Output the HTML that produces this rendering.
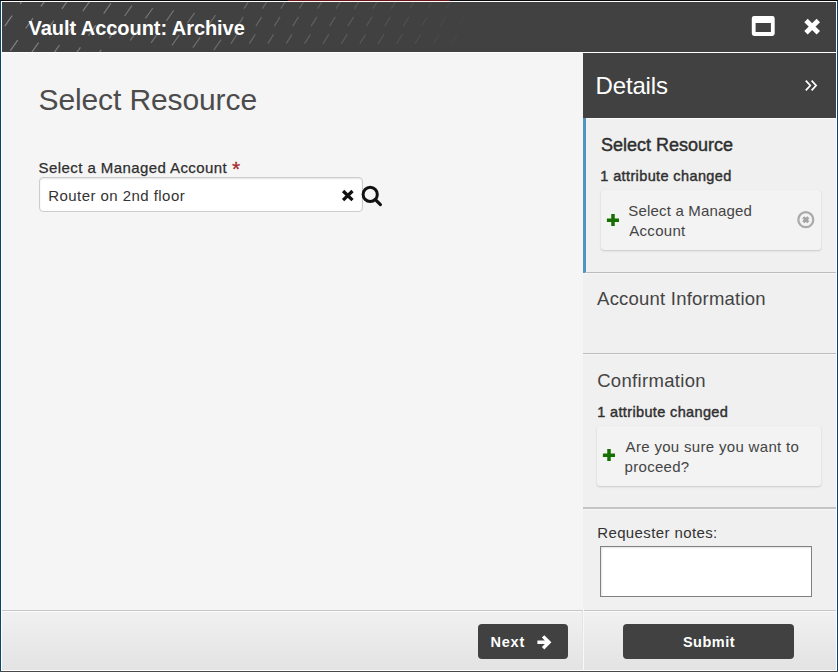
<!DOCTYPE html>
<html><head><meta charset="utf-8"><title>Vault Account: Archive</title>
<style>
*{box-sizing:border-box;margin:0;padding:0}
html,body{width:838px;height:672px;overflow:hidden;background:#f5f5f5;font-family:"Liberation Sans",sans-serif;color:#333}
.abs{position:absolute}
#root{position:absolute;left:0;top:0;width:838px;height:672px;overflow:hidden;background:#f5f5f5}
.t{position:absolute;white-space:nowrap;line-height:1}
#hdr{left:2px;top:2px;width:834px;height:50px;background:#414141;overflow:hidden}
#main{left:2px;top:53px;width:581px;height:557px;background:#f5f5f5}
#side{left:583px;top:53px;width:253px;height:557px;background:#f0f0f0}
#dhead{left:583px;top:53px;width:253px;height:65px;background:#414141}
.card{position:absolute;background:#f3f3f3;border-radius:3px;box-shadow:0 1px 2px rgba(0,0,0,.16),0 0 1px rgba(0,0,0,.07)}
.hline{position:absolute;left:583px;width:253px;height:1px}
.btn{position:absolute;background:#414141;border-radius:4px;height:35px;top:624px}
</style></head><body>
<div id="root">
  <!-- outer frame -->
  <div class="abs" style="left:0;top:0;width:838px;height:1px;background:#0a0a0a"></div>
  <div class="abs" style="left:288px;top:0;width:162px;height:1px;background:#6d1515"></div>
  <div class="abs" style="left:0;top:1px;width:1px;height:671px;background:#03496d"></div>
  <div class="abs" style="left:837px;top:1px;width:1px;height:671px;background:#0e3f6b"></div>
  <div class="abs" style="left:1px;top:1px;width:836px;height:670px;background:#fff"></div>
  <div class="abs" style="left:0;top:671px;width:838px;height:1px;background:#474747"></div>

  <!-- title bar -->
  <div class="abs" id="hdr">
    <svg class="abs" style="left:0;top:0" width="500" height="50" viewBox="2 2 500 50">
      <defs><linearGradient id="fd" x1="0" x2="1" y1="0" y2="0">
        <stop offset="0" stop-color="#fff" stop-opacity=".36"/>
        <stop offset=".45" stop-color="#fff" stop-opacity=".22"/>
        <stop offset=".7" stop-color="#fff" stop-opacity=".13"/>
        <stop offset=".96" stop-color="#fff" stop-opacity="0"/></linearGradient>
        <mask id="mk"><rect x="0" y="0" width="500" height="60" fill="url(#fd)"/></mask>
      </defs>
      <g stroke="#fff" stroke-width="1.15" mask="url(#mk)" stroke-linecap="butt">
<line x1="-0.8" y1="1.6" x2="6.5" y2="-8.8"/>
<line x1="4.8" y1="26.1" x2="12.1" y2="15.7"/>
<line x1="10.4" y1="50.6" x2="17.7" y2="40.2"/>
<line x1="20.1" y1="4.0" x2="27.4" y2="-6.4"/>
<line x1="25.7" y1="28.5" x2="33.0" y2="18.1"/>
<line x1="31.3" y1="53.0" x2="38.6" y2="42.6"/>
<line x1="41.0" y1="6.4" x2="48.3" y2="-4.0"/>
<line x1="46.6" y1="30.9" x2="53.9" y2="20.5"/>
<line x1="52.2" y1="55.4" x2="59.5" y2="45.0"/>
<line x1="61.9" y1="8.8" x2="69.2" y2="-1.6"/>
<line x1="67.5" y1="33.3" x2="74.8" y2="22.9"/>
<line x1="73.1" y1="57.8" x2="80.4" y2="47.4"/>
<line x1="82.8" y1="11.2" x2="90.1" y2="0.8"/>
<line x1="88.4" y1="35.7" x2="95.7" y2="25.3"/>
<line x1="94.0" y1="60.2" x2="101.3" y2="49.8"/>
<line x1="103.7" y1="13.6" x2="111.0" y2="3.2"/>
<line x1="109.3" y1="38.1" x2="116.6" y2="27.7"/>
<line x1="114.9" y1="62.6" x2="122.2" y2="52.2"/>
<line x1="124.6" y1="16.0" x2="131.9" y2="5.6"/>
<line x1="130.2" y1="40.5" x2="137.5" y2="30.1"/>
<line x1="145.5" y1="18.4" x2="152.8" y2="8.0"/>
<line x1="151.1" y1="42.9" x2="158.4" y2="32.5"/>
<line x1="166.4" y1="20.8" x2="173.7" y2="10.4"/>
<line x1="172.0" y1="45.3" x2="179.3" y2="34.9"/>
<line x1="187.3" y1="23.2" x2="194.6" y2="12.8"/>
<line x1="192.9" y1="47.7" x2="200.2" y2="37.3"/>
<line x1="202.6" y1="1.1" x2="209.9" y2="-9.3"/>
<line x1="208.2" y1="25.6" x2="215.5" y2="15.2"/>
<line x1="213.8" y1="50.1" x2="221.1" y2="39.7"/>
<line x1="244.0" y1="8.6" x2="249.8" y2="-0.6"/>
<line x1="262.4" y1="8.6" x2="268.2" y2="-0.6"/>
<line x1="280.8" y1="8.6" x2="286.6" y2="-0.6"/>
<line x1="299.2" y1="8.6" x2="305.0" y2="-0.6"/>
<line x1="317.6" y1="8.6" x2="323.4" y2="-0.6"/>
<line x1="336.0" y1="8.6" x2="341.8" y2="-0.6"/>
<line x1="354.4" y1="8.6" x2="360.2" y2="-0.6"/>
<line x1="372.8" y1="8.6" x2="378.6" y2="-0.6"/>
<line x1="391.2" y1="8.6" x2="397.0" y2="-0.6"/>
<line x1="409.6" y1="8.6" x2="415.4" y2="-0.6"/>
<line x1="428.0" y1="8.6" x2="433.8" y2="-0.6"/>
<line x1="446.4" y1="8.6" x2="452.2" y2="-0.6"/>
<line x1="464.8" y1="8.6" x2="470.6" y2="-0.6"/>
<line x1="483.2" y1="8.6" x2="489.0" y2="-0.6"/>
<line x1="237.5" y1="26.1" x2="243.3" y2="16.9"/>
<line x1="255.9" y1="26.1" x2="261.7" y2="16.9"/>
<line x1="274.3" y1="26.1" x2="280.1" y2="16.9"/>
<line x1="292.7" y1="26.1" x2="298.5" y2="16.9"/>
<line x1="311.1" y1="26.1" x2="316.9" y2="16.9"/>
<line x1="329.5" y1="26.1" x2="335.3" y2="16.9"/>
<line x1="347.9" y1="26.1" x2="353.7" y2="16.9"/>
<line x1="366.3" y1="26.1" x2="372.1" y2="16.9"/>
<line x1="384.7" y1="26.1" x2="390.5" y2="16.9"/>
<line x1="403.1" y1="26.1" x2="408.9" y2="16.9"/>
<line x1="421.5" y1="26.1" x2="427.3" y2="16.9"/>
<line x1="439.9" y1="26.1" x2="445.7" y2="16.9"/>
<line x1="458.3" y1="26.1" x2="464.1" y2="16.9"/>
<line x1="476.7" y1="26.1" x2="482.5" y2="16.9"/>
<line x1="231.0" y1="43.6" x2="236.8" y2="34.4"/>
<line x1="249.4" y1="43.6" x2="255.2" y2="34.4"/>
<line x1="267.8" y1="43.6" x2="273.6" y2="34.4"/>
<line x1="286.2" y1="43.6" x2="292.0" y2="34.4"/>
<line x1="304.6" y1="43.6" x2="310.4" y2="34.4"/>
<line x1="323.0" y1="43.6" x2="328.8" y2="34.4"/>
<line x1="341.4" y1="43.6" x2="347.2" y2="34.4"/>
<line x1="359.8" y1="43.6" x2="365.6" y2="34.4"/>
<line x1="378.2" y1="43.6" x2="384.0" y2="34.4"/>
<line x1="396.6" y1="43.6" x2="402.4" y2="34.4"/>
<line x1="415.0" y1="43.6" x2="420.8" y2="34.4"/>
<line x1="433.4" y1="43.6" x2="439.2" y2="34.4"/>
<line x1="451.8" y1="43.6" x2="457.6" y2="34.4"/>
<line x1="470.2" y1="43.6" x2="476.0" y2="34.4"/>
<line x1="488.6" y1="43.6" x2="494.4" y2="34.4"/>
<line x1="242.9" y1="61.1" x2="248.7" y2="51.9"/>
<line x1="261.3" y1="61.1" x2="267.1" y2="51.9"/>
<line x1="279.7" y1="61.1" x2="285.5" y2="51.9"/>
<line x1="298.1" y1="61.1" x2="303.9" y2="51.9"/>
<line x1="316.5" y1="61.1" x2="322.3" y2="51.9"/>
<line x1="334.9" y1="61.1" x2="340.7" y2="51.9"/>
<line x1="353.3" y1="61.1" x2="359.1" y2="51.9"/>
<line x1="371.7" y1="61.1" x2="377.5" y2="51.9"/>
<line x1="390.1" y1="61.1" x2="395.9" y2="51.9"/>
<line x1="408.5" y1="61.1" x2="414.3" y2="51.9"/>
<line x1="426.9" y1="61.1" x2="432.7" y2="51.9"/>
<line x1="445.3" y1="61.1" x2="451.1" y2="51.9"/>
<line x1="463.7" y1="61.1" x2="469.5" y2="51.9"/>
<line x1="482.1" y1="61.1" x2="487.9" y2="51.9"/>
      </g>
    </svg>
  </div>
  <div class="t" id="title" style="left:28.6px;top:18px;font-size:20px;font-weight:bold;color:#fff;letter-spacing:-0.06px">Vault Account: Archive</div>
  <!-- maximize icon -->
  <svg class="abs" style="left:751px;top:15px" width="25" height="22" viewBox="0 0 25 22">
    <path fill="#fff" fill-rule="evenodd" d="M3.2 1 H21.3 A2.4 2.4 0 0 1 23.7 3.4 V18.6 A2.4 2.4 0 0 1 21.3 21 H3.2 A2.4 2.4 0 0 1 0.8 18.6 V3.4 A2.4 2.4 0 0 1 3.2 1 Z M4.6 8.0 V17.0 H19.9 V8.0 Z"/>
  </svg>
  <!-- close icon -->
  <svg class="abs" style="left:803px;top:18px" width="18" height="18" viewBox="0 0 18 18">
    <path d="M3.0 2.5 L15.3 14.8 M15.3 2.5 L3.0 14.8" stroke="#fff" stroke-width="4.8" stroke-linecap="butt" fill="none"/>
  </svg>

  <!-- main -->
  <div class="abs" id="main"></div>
  <div class="t" id="h1" style="left:38.5px;top:85px;font-size:30px;color:#4c4c4c;letter-spacing:-0.11px">Select Resource</div>
  <div class="t" id="lbl" style="left:38.6px;top:159.5px;letter-spacing:0.42px;font-size:15px;color:#2e2e2e;-webkit-text-stroke:.25px #2e2e2e">Select a Managed Account</div>
  <div class="t" id="ast" style="left:232px;top:158px;font-size:21px;color:#a52a2a;-webkit-text-stroke:.3px #a52a2a">*</div>
  <div class="abs" style="left:39px;top:177px;width:324px;height:35px;background:#fff;border:1px solid #cccccc;border-radius:4px;box-shadow:inset 0 1px 2px rgba(0,0,0,.10)"></div>
  <div class="t" id="inp" style="left:48.2px;top:188px;font-size:15px;color:#333;letter-spacing:0.45px">Router on 2nd floor</div>
  <svg class="abs" style="left:341px;top:189px" width="14" height="14" viewBox="0 0 14 14">
    <path d="M2.1 2.0 L11.5 11.1 M11.5 2.0 L2.1 11.1" stroke="#111" stroke-width="3.3" fill="none"/>
  </svg>
  <svg class="abs" style="left:360px;top:184px" width="24" height="24" viewBox="0 0 24 24">
    <circle cx="10.2" cy="10.4" r="7.1" fill="none" stroke="#111" stroke-width="3"/>
    <path d="M15.4 15.6 L20.4 20.6" stroke="#111" stroke-width="3.2" stroke-linecap="round"/>
  </svg>

  <!-- side panel -->
  <div class="abs" id="side"></div>
  <div class="abs" id="dhead"></div>
  <div class="t" id="det" style="left:595.5px;top:73.7px;font-size:24px;color:#fff;letter-spacing:-0.15px">Details</div>
  <svg class="abs" style="left:804px;top:79px" width="14" height="13" viewBox="0 0 14 13">
    <path d="M1.8 1.6 L6.3 6.5 L1.8 11.4 M7.6 1.6 L12.1 6.5 L7.6 11.4" fill="none" stroke="#fff" stroke-width="1.7"/>
  </svg>

  <!-- section 1 -->
  <div class="abs" style="left:583px;top:118px;width:253px;height:1px;background:#fafafa"></div>
  <div class="abs" style="left:583px;top:118px;width:3px;height:155px;background:#5393bc"></div>
  <div class="t" id="s1h" style="left:601px;top:135.6px;font-size:18px;color:#2f2f2f;-webkit-text-stroke:.45px #2f2f2f;letter-spacing:0px">Select Resource</div>
  <div class="t" id="s1c" style="left:600.3px;top:169px;font-size:14.5px;color:#2f2f2f;-webkit-text-stroke:.4px #2f2f2f;letter-spacing:0.38px">1 attribute changed</div>
  <div class="card" style="left:601px;top:190px;width:220px;height:60px"></div>
  <svg class="abs" style="left:606px;top:213px" width="14" height="14" viewBox="0 0 14 14">
    <path d="M7 1.1 V13.1 M0.9 7.15 H13" stroke="#167000" stroke-width="3.5" fill="none"/>
  </svg>
  <div class="t" id="c1a" style="left:628.3px;top:203px;font-size:15px;color:#444;letter-spacing:0.18px">Select a Managed</div>
  <div class="t" id="c1b" style="left:629.3px;top:223.3px;font-size:15px;color:#444;letter-spacing:0.28px">Account</div>
  <svg class="abs" style="left:796px;top:210px" width="20" height="20" viewBox="0 0 20 20">
    <circle cx="9.8" cy="9.7" r="7.5" fill="none" stroke="#aaaaaa" stroke-width="2.2"/>
    <path d="M7.3 7.2 L12.3 12.2 M12.3 7.2 L7.3 12.2" stroke="#a4a4a4" stroke-width="3"/>
  </svg>
  <div class="hline" style="top:272px;left:585px;width:251px;background:#bcbcbc"></div>
  <div class="hline" style="top:273px;background:#f6f6f6"></div>

  <!-- section 2 -->
  <div class="t" id="s2h" style="left:597.1px;top:290px;font-size:18.5px;color:#444;letter-spacing:0.22px">Account Information</div>
  <div class="hline" style="top:353px;background:#bcbcbc"></div>
  <div class="hline" style="top:354px;background:#f6f6f6"></div>

  <!-- section 3 -->
  <div class="t" id="s3h" style="left:597.2px;top:371.8px;font-size:18.5px;color:#444;letter-spacing:0.32px">Confirmation</div>
  <div class="t" id="s3c" style="left:597.2px;top:405px;font-size:14.5px;color:#2f2f2f;-webkit-text-stroke:.4px #2f2f2f;letter-spacing:0.36px">1 attribute changed</div>
  <div class="card" style="left:597px;top:426px;width:224px;height:60px"></div>
  <svg class="abs" style="left:602px;top:448px" width="14" height="14" viewBox="0 0 14 14">
    <path d="M7 1.1 V13.1 M0.9 7.15 H13" stroke="#167000" stroke-width="3.5" fill="none"/>
  </svg>
  <div class="t" id="c2a" style="left:625.6px;top:439.3px;font-size:15px;color:#444;letter-spacing:0.32px">Are you sure you want to</div>
  <div class="t" id="c2b" style="left:624.6px;top:458.7px;font-size:15px;color:#444;letter-spacing:0.29px">proceed?</div>
  <div class="hline" style="top:507px;height:2px;background:#c4c4c4"></div>
  <div class="hline" style="top:509px;background:#f6f6f6"></div>

  <!-- notes -->
  <div class="t" id="rn" style="left:597.2px;top:525px;font-size:15px;color:#333;letter-spacing:0.39px">Requester notes:</div>
  <div class="abs" style="left:600px;top:546px;width:212px;height:51px;background:#fff;border:1px solid #808080;box-shadow:inset 1px 1px 2px rgba(0,0,0,.10)"></div>

  <!-- footer -->
  <div class="abs" style="left:2px;top:610px;width:834px;height:60px;background:linear-gradient(#f1f1f1,#e3e3e3)"></div>
  <div class="abs" style="left:2px;top:610px;width:834px;height:1px;background:#c6c6c6"></div>
  <div class="abs" style="left:2px;top:611px;width:834px;height:1px;background:#fbfbfb"></div>
  <div class="abs" style="left:582px;top:611px;width:1px;height:59px;background:#e4e4e4"></div>
  <div class="abs" style="left:583px;top:609px;width:1px;height:61px;background:#f8f8f8"></div>
  <div class="btn" style="left:478px;width:90px"></div>
  <div class="t" id="nx" style="left:490.4px;top:634.8px;font-size:14.5px;font-weight:bold;color:#fff;letter-spacing:0.8px">Next</div>
  <svg class="abs" style="left:536px;top:634px" width="16" height="16" viewBox="0 0 16 16">
    <path d="M1.4 8.3 H12 M7.1 2.4 L13 8.3 L7.1 14.2" fill="none" stroke="#fff" stroke-width="3.4" stroke-linejoin="miter"/>
  </svg>
  <div class="btn" style="left:623px;width:171px"></div>
  <div class="t" id="sb" style="left:682.9px;top:634.7px;font-size:14.5px;font-weight:bold;color:#fff;letter-spacing:0.5px">Submit</div>
</div>
</body></html>
